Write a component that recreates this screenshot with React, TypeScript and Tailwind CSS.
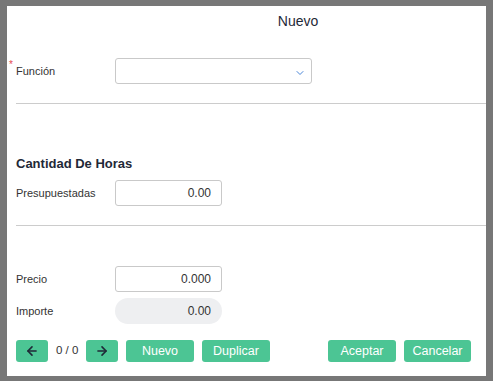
import React from 'react';
import { ArrowLeft, ArrowRight, ChevronDown } from 'lucide-react';

const font = { fontFamily: '"Liberation Sans", Arial, sans-serif' };

const Field: React.FC<{ label: string; required?: boolean; children: React.ReactNode }> = ({ label, required, children }) => (
  <div className="flex items-center h-[26px]">
    <div className="relative w-[99px] text-[11px] text-[#333]">
      {required && <span className="absolute -left-[7px] -top-[6px] text-[10px] text-[#e5484d]">*</span>}
      {label}
    </div>
    {children}
  </div>
);

const NumberBox: React.FC<{ value: string; readOnly?: boolean }> = ({ value, readOnly }) => (
  <div
    className={
      readOnly
        ? 'w-[107px] h-[26px] rounded-[13px] bg-[#eeeff1] flex items-center justify-end pr-[11px] text-[12px] text-[#333]'
        : 'w-[107px] h-[26px] rounded-[3px] border border-[#c9c9c9] bg-white flex items-center justify-end pr-[10px] text-[12px] text-[#333]'
    }
  >
    {value}
  </div>
);

const GreenButton: React.FC<{ children: React.ReactNode; width?: string }> = ({ children, width = 'w-[68px]' }) => (
  <button className={`${width} h-[22px] rounded-[3px] bg-[#4cc594] text-white text-[12.5px] flex items-center justify-center`}>
    {children}
  </button>
);

export default function App() {
  return (
    <div className="w-[493px] h-[381px] bg-[#777777] pt-[6px] pl-[7px] pr-[7px] pb-[5px]" style={font}>
      <div className="h-full bg-white flex flex-col">
        {/* Title */}
        <div className="h-[30px] flex items-center justify-center pl-[103px] text-[14px] text-[#1f2937]">Nuevo</div>

        {/* Funcion */}
        <div className="mt-[22px] pl-[9px]">
          <Field label="Función" required>
            <div className="relative w-[197px] h-[26px] rounded-[3px] border border-[#c9c9c9] bg-white">
              <ChevronDown className="absolute right-[5px] top-[8px] text-[#4a86d8]" size={12} strokeWidth={2} />
            </div>
          </Field>
        </div>

        <div className="mt-[19px] ml-[9px] h-px bg-[#cccccc]" />

        {/* Cantidad de horas */}
        <div className="mt-[52px] pl-[9px] h-[16px] flex items-center text-[13px] font-bold text-[#1f2937]">Cantidad De Horas</div>
        <div className="mt-[8px] pl-[9px]">
          <Field label="Presupuestadas">
            <NumberBox value="0.00" />
          </Field>
        </div>

        <div className="mt-[19px] ml-[9px] h-px bg-[#cccccc]" />

        {/* Precio / Importe */}
        <div className="mt-[40px] pl-[9px] flex flex-col gap-[6px]">
          <Field label="Precio">
            <NumberBox value="0.000" />
          </Field>
          <Field label="Importe">
            <NumberBox value="0.00" readOnly />
          </Field>
        </div>

        {/* Footer */}
        <div className="mt-[16px] pl-[9px] pr-[15px] flex items-center">
          <div className="flex items-center gap-[8px]">
            <GreenButton width="w-[32px]">
              <ArrowLeft size={14} strokeWidth={2.75} className="text-[#1f2937]" />
            </GreenButton>
            <span className="w-[22px] whitespace-nowrap text-[11.5px] text-[#333] text-center">0 / 0</span>
            <GreenButton width="w-[32px]">
              <ArrowRight size={14} strokeWidth={2.75} className="text-[#1f2937]" />
            </GreenButton>
            <GreenButton>Nuevo</GreenButton>
            <GreenButton>Duplicar</GreenButton>
          </div>
          <div className="ml-auto flex items-center gap-[8px]">
            <GreenButton>Aceptar</GreenButton>
            <GreenButton width="w-[67px]">Cancelar</GreenButton>
          </div>
        </div>
      </div>
    </div>
  );
}
